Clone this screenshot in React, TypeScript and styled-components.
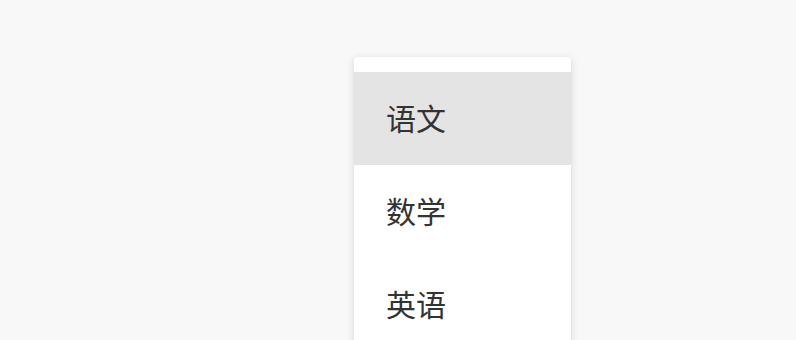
import React from "react";
import styled, { createGlobalStyle } from "styled-components";

const Global = createGlobalStyle`
  html, body { margin: 0; padding: 0; background: #f8f8f8; }
  body { font-family: "Noto Sans CJK SC", "Noto Sans", sans-serif; }
`;

const Page = styled.div`
  width: 796px;
  height: 340px;
  overflow: hidden;
  display: flex;
  justify-content: flex-start;
  padding-left: 354px;
  padding-top: 57px;
  box-sizing: border-box;
`;

const Menu = styled.ul`
  list-style: none;
  margin: 0;
  width: 217px;
  padding: 15px 0 16px;
  background: #ffffff;
  border-radius: 4px;
  box-shadow: 0 2px 10px rgba(0, 0, 0, 0.12), 0 1px 3px rgba(0, 0, 0, 0.05);
  align-self: flex-start;
`;

const Item = styled.li<{ $active?: boolean }>`
  height: 93px;
  box-sizing: border-box;
  display: flex;
  align-items: center;
  padding: 0 0 3px 32px;
  font-size: 30px;
  color: #333333;
  background: ${(p) => (p.$active ? "#e4e4e4" : "transparent")};
`;

const items = ["语文", "数学", "英语"];

export default function App() {
  return (
    <>
      <Global />
      <Page>
        <Menu>
          {items.map((t, i) => (
            <Item key={t} $active={i === 0}>
              {t}
            </Item>
          ))}
        </Menu>
      </Page>
    </>
  );
}
